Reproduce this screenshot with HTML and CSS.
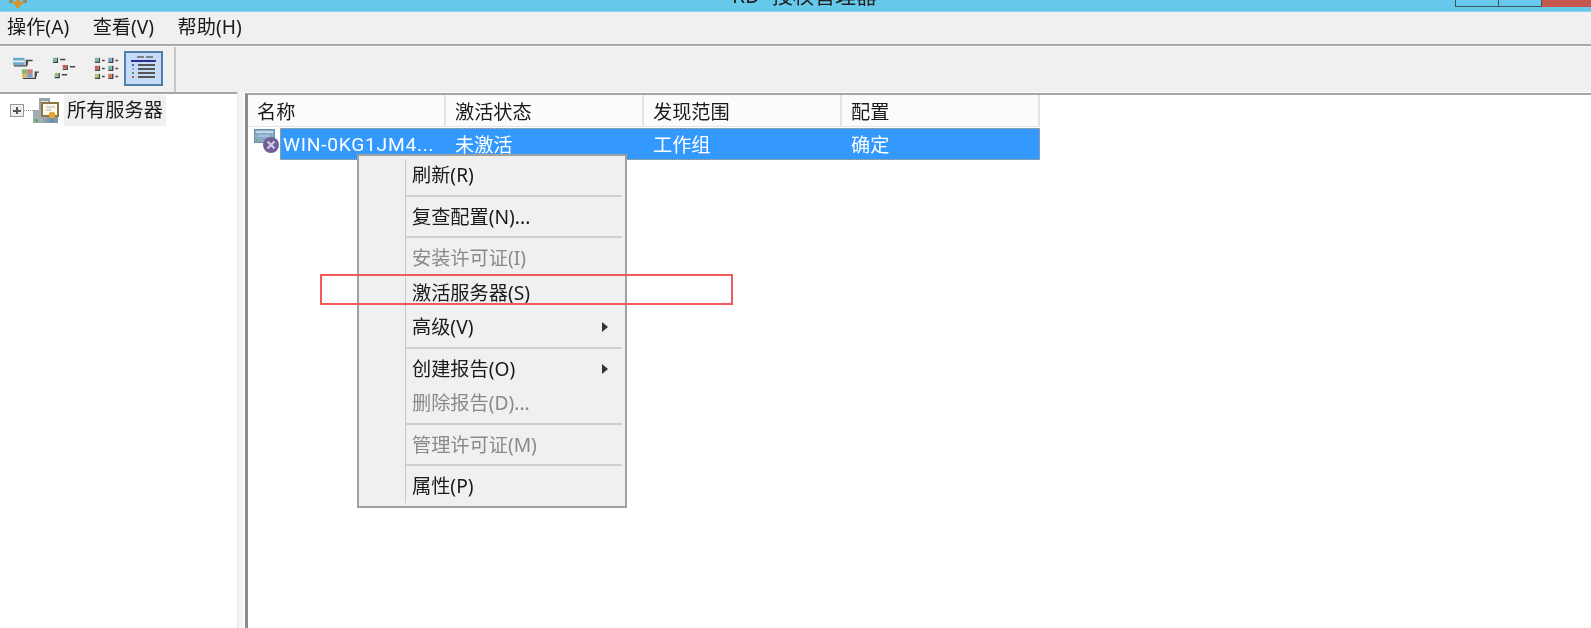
FILE: index.html
```html
<!DOCTYPE html>
<html lang="zh-CN">
<head>
<meta charset="utf-8">
<title>RD 授权管理器</title>
<link rel="stylesheet" href="styles.css">
</head>
<body>
<div class="window">
  <header class="titlebar">
    <svg class="app-icon" viewBox="0 0 24 12" width="24" height="12"><path d="M12 0v8M8 2l4 4 4-4" stroke="#d9921e" stroke-width="3" fill="none"/><rect x="3" y="0" width="4" height="3" fill="#9a8a60"/><rect x="17" y="0" width="4" height="3" fill="#9a8a60"/></svg>
    <span class="title">RD 授权管理器</span>
    <div class="winbtns"><span class="winbtn"></span><span class="winbtn"></span><span class="winbtn close"></span></div>
  </header>
  <nav class="menubar"><span>操作(A)</span><span>查看(V)</span><span>帮助(H)</span></nav>
  <div class="toolbar">
    <div class="tools">
      <button class="tool" aria-label="大图标">
        <svg viewBox="0 0 30 28" width="27" height="25"><path d="M2 11h14V5h7M17 5v5" stroke="#444" stroke-width="1.5" fill="none"/><rect x="1" y="2" width="13" height="8" fill="#6aaccb"/><rect x="1" y="5" width="13" height="2" fill="#e8f2f6"/><path d="M12 25h14V18h4M27 18v5" stroke="#444" stroke-width="1.5" fill="none"/><rect x="11" y="15" width="6" height="5" fill="#86b56f"/><rect x="17" y="15" width="6" height="5" fill="#d07a70"/><rect x="11" y="20" width="6" height="4" fill="#e0b868"/><rect x="17" y="20" width="6" height="4" fill="#7c9fd0"/></svg>
      </button>
      <button class="tool" aria-label="小图标">
        <svg viewBox="0 0 30 28" width="27" height="25"><g fill="none" stroke="#444" stroke-width="1.6"><path d="M2 7h5V2M10 4h6M13 15h5V10M21 12h6M4 24h5V19M12 21h6"/></g><rect x="2" y="2" width="4" height="4" fill="#6fb8a6"/><rect x="13" y="10" width="4" height="4" fill="#d0564c"/><rect x="4" y="19" width="4" height="4" fill="#92c07a"/></svg>
      </button>
      <button class="tool" aria-label="列表">
        <svg viewBox="0 0 30 28" width="27" height="25"><g fill="none" stroke="#444" stroke-width="1.6"><path d="M2 7h5V2M10 5h3M17 7h5V2M25 5h3M2 16h5V11M10 14h3M17 16h5V11M25 14h3M2 25h5V20M10 23h3M17 25h5V20M25 23h3"/></g><rect x="2" y="2" width="4" height="4" fill="#6fb8a6"/><rect x="17" y="2" width="4" height="4" fill="#7aa4cc"/><rect x="2" y="11" width="4" height="4" fill="#d0564c"/><rect x="17" y="11" width="4" height="4" fill="#6fb8a6"/><rect x="2" y="20" width="4" height="4" fill="#b0c270"/><rect x="17" y="20" width="4" height="4" fill="#d07050"/></svg>
      </button>
      <button class="tool active" aria-label="详细信息">
        <svg viewBox="0 0 28 28" width="28" height="28"><path d="M7 2h7M16 2h7" stroke="#666" stroke-width="1.5"/><path d="M1 6h25" stroke="#1a1a8c" stroke-width="1.8"/><path d="M8 10h17M8 14h17M8 18h17M8 22h17" stroke="#555" stroke-width="2"/><rect x="2" y="9" width="2" height="2" fill="#3a6ab0"/><rect x="2" y="13" width="2" height="2" fill="#8ab0d0"/><rect x="2" y="17" width="2" height="2" fill="#5aa060"/><rect x="2" y="21" width="2" height="2" fill="#c9544a"/></svg>
      </button>
    </div>
  </div>
  <main class="panes">
    <aside class="tree">
      <div class="node">
        <span class="expander"></span>
        <span class="dots"></span>
        <svg class="server-icon" viewBox="0 0 26 26" width="26" height="26"><rect x="6" y="0" width="11" height="25" fill="#98a3ab"/><rect x="8" y="3" width="7" height="2" fill="#e3e7ea"/><rect x="0" y="12" width="10" height="13" fill="#a3acb3"/><rect x="2" y="21" width="3" height="3" fill="#57b04f"/><rect x="9" y="5" width="16" height="13" fill="#fdf9ec" stroke="#8d7444" stroke-width="2"/><path d="M13 9h9M13 12h5" stroke="#a6b0b8"/><rect x="14" y="19" width="11" height="6" fill="#8798a5"/><circle cx="19" cy="17" r="3.2" fill="#e6a530"/><rect x="17" y="21" width="3" height="3" fill="#4d8fc4"/></svg>
        <span class="node-label">所有服务器</span>
      </div>
    </aside>
    <div class="splitter"></div>
    <section class="list">
      <div class="row head">
        <div class="cell name">名称</div><div class="cell">激活状态</div><div class="cell">发现范围</div><div class="cell">配置</div>
      </div>
      <div class="row item">
        <svg class="row-icon" viewBox="0 0 28 24" width="28" height="24"><rect x="0.5" y="0.5" width="20" height="13" fill="#88aacb" stroke="#6d8fb3"/><rect x="2" y="2" width="17" height="2" fill="#c5d8e8"/><path d="M4 7h12" stroke="#c5d8e8"/><rect x="2" y="10" width="2" height="2" fill="#5cb85c"/><circle cx="17" cy="16" r="8" fill="#6f5f96"/><path d="M13.5 12.5l7 7M20.5 12.5l-7 7" stroke="#cfc8e4" stroke-width="2.4"/></svg>
        <div class="selection">
          <div class="cell name">WIN-0KG1JM4...</div><div class="cell">未激活</div><div class="cell">工作组</div><div class="cell">确定</div>
        </div>
      </div>
    </section>
  </main>
  <div class="context-menu">
    <div class="entry">刷新(R)</div>
    <hr>
    <div class="entry">复查配置(N)...</div>
    <hr>
    <div class="entry off">安装许可证(I)</div>
    <div class="entry">激活服务器(S)</div>
    <div class="entry sub">高级(V)<i class="arrow"></i></div>
    <hr>
    <div class="entry sub">创建报告(O)<i class="arrow"></i></div>
    <div class="entry off">删除报告(D)...</div>
    <hr>
    <div class="entry off">管理许可证(M)</div>
    <hr>
    <div class="entry">属性(P)</div>
  </div>
  <div class="callout"></div>
</div>
</body>
</html>
```
FILE: styles.css
```css
* { box-sizing: border-box; }
html, body { margin: 0; height: 100%; background: #fff; overflow: hidden; }
body { font-family: "Noto Sans", "Noto Sans CJK SC", sans-serif; font-size: 19.2px; color: #1a1a1a; }
.window { position: relative; width: 1591px; height: 628px; display: flex; flex-direction: column; overflow: hidden; filter: blur(0.45px); }

.titlebar { height: 12px; flex: none; background: #66c9eb; position: relative; display: flex; justify-content: center; box-shadow: inset 0 -1px 0 #86d6f0; }
.app-icon { position: absolute; left: 6px; top: 0; }
.title { font-size: 21px; line-height: 24px; margin-top: -17px; height: 29px; color: #222; margin-left: 18px; word-spacing: 6px; }
.winbtns { position: absolute; right: 0; top: 0; display: flex; height: 7px; }
.winbtn { width: 44px; height: 7px; background: #66c9eb; border: 1px solid #3f5560; border-top: 0; margin-left: -1px; }
.winbtn.close { width: 49px; background: #c4574e; border: 0; margin-left: 0; }

.menubar { height: 34px; flex: none; background: #f0f0f0; border-bottom: 2px solid #aaa; display: flex; align-items: center; padding-left: 7px; gap: 23.5px; }
.menubar span { line-height: 30px; margin-top: -3px; }

.toolbar { height: 46px; flex: none; background: #f0f0f0; border-top: 1px solid #fafafa; display: flex; }
.tools { width: 176px; padding: 4px 0 0 7px; border-right: 2px solid #c8c8c8; display: flex; align-items: flex-start; }
.tool { width: 39px; height: 35px; padding: 0 3px 0 0; border: 1px solid transparent; background: none; display: flex; align-items: center; justify-content: center; }
.tool:nth-child(3) { padding: 0 0 0 3px; }
.tool.active { padding: 0; border: 2px solid #4f81a8; background: #c4dcf7; }

.panes { flex: 1; display: flex; min-height: 0; background: #fff; }
.tree { width: 237px; flex: none; padding: 1px 0 0 10px; border-top: 2px solid #a5a5a5; }
.node { display: flex; align-items: center; height: 31px; }
.expander { width: 14px; height: 13px; border: 1px solid #999; background: linear-gradient(#555,#555) center/8px 2px no-repeat, linear-gradient(#555,#555) center/2px 7px no-repeat, #eee; }
.dots { width: 9px; border-top: 1px dotted #999; }
.server-icon { flex: none; }
.node-label { margin-left: 5px; padding: 0 3px; height: 31px; line-height: 30px; background: #f0f0f0; }

.splitter { width: 8px; flex: none; background: linear-gradient(90deg, #e6e6e6, #f5f5f5 25%, #f5f5f5 75%, #fff); }
.list { flex: 1; border-left: 3px solid #8c8c8c; margin-top: 1px; border-top: 2px solid #a5a5a5; }
.row { display: flex; }
.head { height: 32px; width: 792px; background: #fbfbfb; border-bottom: 1px solid #e3e3e3; }
.head .cell { border-right: 2px solid #e3e3e3; line-height: 33px; }
.cell { width: 198px; padding-left: 9px; white-space: nowrap; flex: none; }
.item { height: 33px; margin-top: 1px; position: relative; padding-left: 32px; }
.row-icon { position: absolute; left: 6px; top: 1px; }
.selection { display: flex; width: 760px; height: 32px; background: #3399ff; color: #fff; outline: 1px dotted #d9a066; outline-offset: -1px; line-height: 33px; }
.selection .name { width: 166px; padding-left: 3px; font-family: Roboto, "Noto Sans", sans-serif; letter-spacing: 0.75px; }

.context-menu { position: absolute; left: 357px; top: 154px; width: 270px; height: 354px; background: #f0f0f0; border: 2px solid #a0a0a0; padding: 2px 3px 3px 46px; }
.context-menu::before { content: ""; position: absolute; left: 46px; top: 3px; bottom: 3px; width: 1px; background: #c8c8c8; }
.entry { position: relative; height: 34.5px; line-height: 33.5px; padding-left: 7px; white-space: nowrap; }
.entry.off { color: #8a8a8a; }
.context-menu hr { margin: 2px 0 3px 1px; height: 2px; border: 0; background: #cfcfcf; }
.arrow { position: absolute; right: 14px; top: 12px; border-left: 6px solid #333; border-top: 5px solid transparent; border-bottom: 5px solid transparent; }

.callout { position: absolute; left: 320px; top: 274px; width: 413px; height: 31px; border: 2px solid #f25a5a; }
```
